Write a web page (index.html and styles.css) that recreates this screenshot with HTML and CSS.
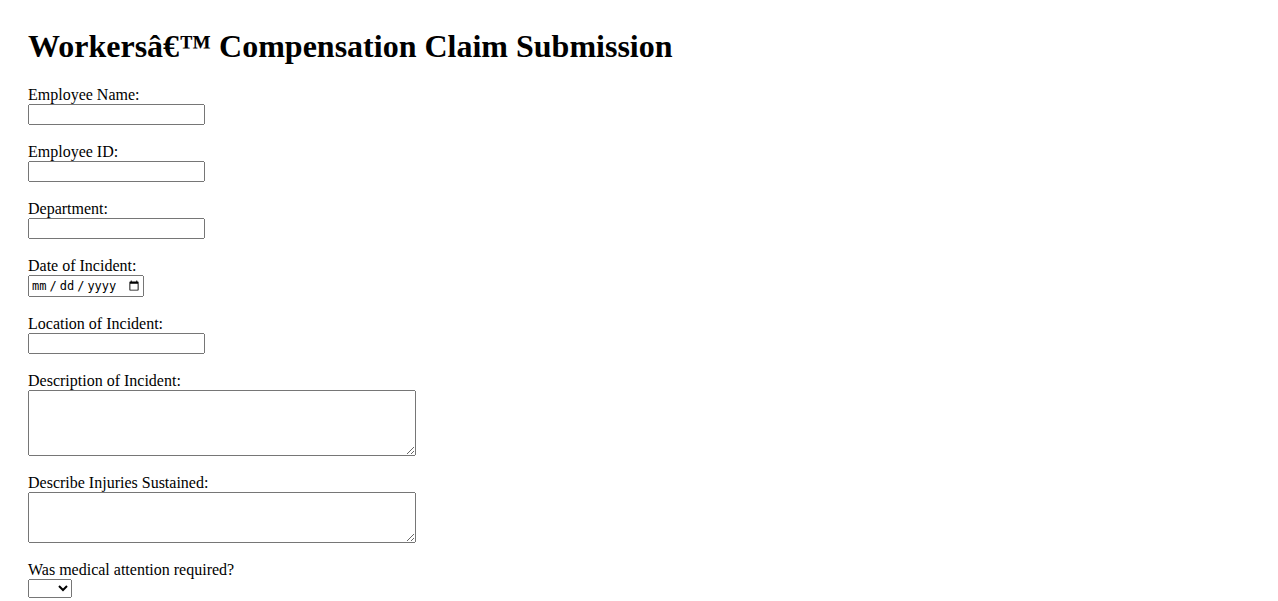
FILE: index.html
```html
<!DOCTYPE html>
<html lang="en">
<head>
<meta charset="utf-8">
<title>Workers Compensation Claim Submission</title>
<link rel="stylesheet" href="styles.css">
</head>
<body>
<div class="page">
  <h1 class="title">Workersâ€™ Compensation Claim Submission</h1>
  <form class="claim-form">
    <div class="field">
      <label class="field-label" for="name">Employee Name:</label>
      <input class="text-input" type="text" id="name">
    </div>
    <div class="field">
      <label class="field-label" for="eid">Employee ID:</label>
      <input class="text-input" type="text" id="eid">
    </div>
    <div class="field">
      <label class="field-label" for="dept">Department:</label>
      <input class="text-input" type="text" id="dept">
    </div>
    <div class="field">
      <label class="field-label" for="date">Date of Incident:</label>
      <input class="date-input" type="date" id="date">
    </div>
    <div class="field">
      <label class="field-label" for="loc">Location of Incident:</label>
      <input class="text-input" type="text" id="loc">
    </div>
    <div class="field">
      <label class="field-label" for="desc">Description of Incident:</label>
      <textarea class="text-area tall" id="desc"></textarea>
    </div>
    <div class="field">
      <label class="field-label" for="inj">Describe Injuries Sustained:</label>
      <textarea class="text-area short" id="inj"></textarea>
    </div>
    <div class="field">
      <label class="field-label" for="med">Was medical attention required?</label>
      <select class="select-input" id="med">
        <option value=""></option>
        <option value="yes">Yes</option>
        <option value="no">No</option>
      </select>
    </div>
  </form>
</div>
</body>
</html>
```

FILE: styles.css
```css
html, body {
  margin: 0;
  padding: 0;
  background: #ffffff;
}
body {
  font-family: "Liberation Serif", "Times New Roman", serif;
  font-size: 16px;
  color: #000;
}
.page {
  padding: 28px 28px;
}
.title {
  font-size: 32px;
  font-weight: bold;
  margin: 0 0 21px 0;
  line-height: 37px;
}
.field {
  margin-bottom: 18px;
}
.field-label {
  display: block;
  line-height: 18px;
}
.text-input {
  width: 177px;
  height: 21px;
  box-sizing: border-box;
  margin: 0;
  vertical-align: bottom;
}
.date-input {
  width: 116px;
  height: 22px;
  box-sizing: border-box;
  margin: 0;
  font-family: "DejaVu Sans Mono", monospace;
  font-size: 12px;
  vertical-align: bottom;
}
.date-input::-webkit-datetime-edit-text {
  padding: 0 2px;
}
.text-area {
  width: 388px;
  box-sizing: border-box;
  margin: 0;
  vertical-align: bottom;
}
.tall { height: 66px; }
.short { height: 51px; }
.select-input {
  width: 44px;
  height: 19px;
  box-sizing: border-box;
  margin: 0;
  vertical-align: bottom;
}
```
